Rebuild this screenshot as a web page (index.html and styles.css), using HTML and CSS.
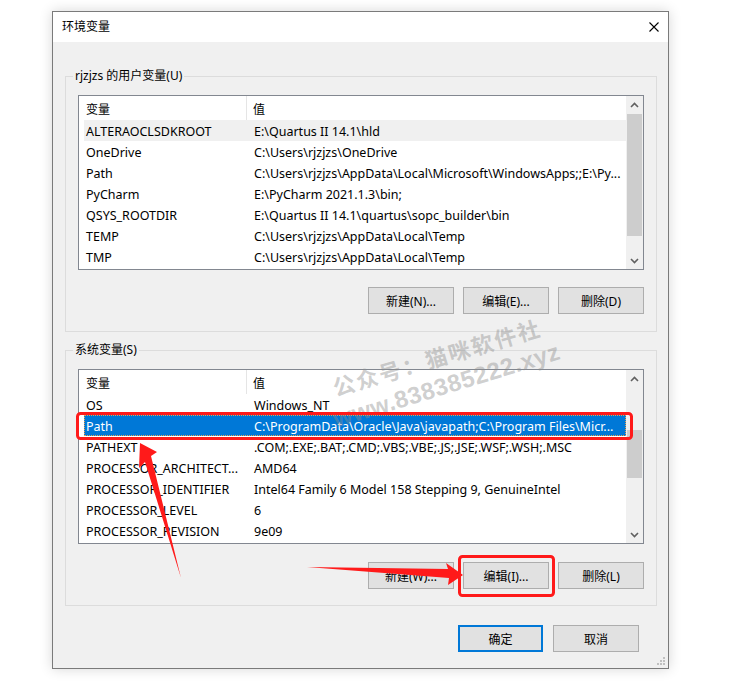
FILE: index.html
```html
<!DOCTYPE html>
<html lang="zh-CN">
<head>
<meta charset="utf-8">
<title>环境变量</title>
<link rel="stylesheet" href="styles.css">
</head>
<body>
<div class="page">
  <div class="window">
    <div class="titlebar">
      <span class="title">环境变量</span>
      <svg class="close" width="10" height="10" viewBox="0 0 10 10"><path d="M0.5 0.5L9.5 9.5M9.5 0.5L0.5 9.5" stroke="#000" stroke-width="1.1" fill="none"/></svg>
    </div>
    <div class="content">
      <div class="group user">
        <span class="legend">rjzjzs 的用户变量(U)</span>
        <div class="list">
          <div class="list-main">
            <div class="list-head"><div class="head-name">变量</div><div class="head-value">值</div></div>
            <div class="rows">
              <div class="row hover"><span class="name">ALTERAOCLSDKROOT</span><span class="value">E:\Quartus II 14.1\hld</span></div>
              <div class="row"><span class="name">OneDrive</span><span class="value">C:\Users\rjzjzs\OneDrive</span></div>
              <div class="row"><span class="name">Path</span><span class="value">C:\Users\rjzjzs\AppData\Local\Microsoft\WindowsApps;;E:\Py...</span></div>
              <div class="row"><span class="name">PyCharm</span><span class="value">E:\PyCharm 2021.1.3\bin;</span></div>
              <div class="row"><span class="name">QSYS_ROOTDIR</span><span class="value">E:\Quartus II 14.1\quartus\sopc_builder\bin</span></div>
              <div class="row"><span class="name">TEMP</span><span class="value">C:\Users\rjzjzs\AppData\Local\Temp</span></div>
              <div class="row"><span class="name">TMP</span><span class="value">C:\Users\rjzjzs\AppData\Local\Temp</span></div>
            </div>
          </div>
          <div class="vscroll">
            <div class="arrow"><svg width="9" height="6" viewBox="0 0 9 6"><path d="M1 5L4.5 1.5L8 5" stroke="#606060" stroke-width="1.6" fill="none"/></svg></div>
            <div class="thumb"></div>
            <div class="spacer"></div>
            <div class="arrow"><svg width="9" height="6" viewBox="0 0 9 6"><path d="M1 1L4.5 4.5L8 1" stroke="#606060" stroke-width="1.6" fill="none"/></svg></div>
          </div>
        </div>
        <div class="btns">
          <div class="btn">新建(N)...</div>
          <div class="btn">编辑(E)...</div>
          <div class="btn">删除(D)</div>
        </div>
      </div>

      <div class="group system">
        <span class="legend">系统变量(S)</span>
        <div class="list">
          <div class="list-main">
            <div class="list-head"><div class="head-name">变量</div><div class="head-value">值</div></div>
            <div class="rows">
              <div class="row"><span class="name">OS</span><span class="value">Windows_NT</span></div>
              <div class="row selected"><span class="name">Path</span><span class="value">C:\ProgramData\Oracle\Java\javapath;C:\Program Files\Micr...</span></div>
              <div class="row"><span class="name">PATHEXT</span><span class="value">.COM;.EXE;.BAT;.CMD;.VBS;.VBE;.JS;.JSE;.WSF;.WSH;.MSC</span></div>
              <div class="row"><span class="name">PROCESSOR_ARCHITECT...</span><span class="value">AMD64</span></div>
              <div class="row"><span class="name">PROCESSOR_IDENTIFIER</span><span class="value">Intel64 Family 6 Model 158 Stepping 9, GenuineIntel</span></div>
              <div class="row"><span class="name">PROCESSOR_LEVEL</span><span class="value">6</span></div>
              <div class="row"><span class="name">PROCESSOR_REVISION</span><span class="value">9e09</span></div>
            </div>
          </div>
          <div class="vscroll">
            <div class="arrow"><svg width="9" height="6" viewBox="0 0 9 6"><path d="M1 5L4.5 1.5L8 5" stroke="#606060" stroke-width="1.6" fill="none"/></svg></div>
            <div class="thumb"></div>
            <div class="spacer"></div>
            <div class="arrow"><svg width="9" height="6" viewBox="0 0 9 6"><path d="M1 1L4.5 4.5L8 1" stroke="#606060" stroke-width="1.6" fill="none"/></svg></div>
          </div>
        </div>
        <div class="btns">
          <div class="btn">新建(W)...</div>
          <div class="btn">编辑(I)...</div>
          <div class="btn">删除(L)</div>
        </div>
      </div>

      <div class="footer">
        <div class="btn ok">确定</div>
        <div class="btn">取消</div>
      </div>
    </div>
    <svg class="grip" width="10" height="10" viewBox="0 0 10 10">
      <rect x="7" y="1" width="2" height="2" fill="#c0c0c0"/>
      <rect x="4" y="4" width="2" height="2" fill="#c0c0c0"/>
      <rect x="7" y="4" width="2" height="2" fill="#c0c0c0"/>
      <rect x="1" y="7" width="2" height="2" fill="#c0c0c0"/>
      <rect x="4" y="7" width="2" height="2" fill="#c0c0c0"/>
      <rect x="7" y="7" width="2" height="2" fill="#c0c0c0"/>
    </svg>
  </div>

  <div class="wm wm1">公众号：猫咪软件社</div>
  <div class="wm wm2">www.838385222.xyz</div>

  <svg class="annot" width="756" height="681" viewBox="0 0 756 681">
    <rect x="77.5" y="413.5" width="554" height="25" rx="3" fill="none" stroke="#ff1a1a" stroke-width="3"/>
    <rect x="459.5" y="556.5" width="94" height="39" rx="3" fill="none" stroke="#ff1a1a" stroke-width="3"/>
    <polygon points="140,443 157,452 151,456 181,578 145,462 139,468" fill="#ff1a1a"/>
    <polygon points="307,567 448,569 446,563 463,575 448,585 449,578" fill="#ff1a1a"/>
  </svg>
</div>
</body>
</html>
```

FILE: styles.css
```css
* { box-sizing: border-box; }

body {
  margin: 0;
  background: #fff;
  font-family: "Noto Sans", "Noto Sans CJK SC", sans-serif;
  font-size: 12px;
  color: #000;
}

.page {
  position: relative;
  width: 756px;
  height: 681px;
  padding: 11px 0 0 52px;
  overflow: hidden;
}

.window {
  position: relative;
  width: 617px;
  height: 658px;
  border: 1px solid #7a7a7a;
  box-shadow: 0 0 12px rgba(0, 0, 0, 0.16);
  display: flex;
  flex-direction: column;
  background: #f0f0f0;
}

.titlebar {
  height: 30px;
  background: #fff;
  display: flex;
  align-items: center;
  justify-content: space-between;
  padding: 0 9px 0 9px;
}

.title { line-height: 30px; }

.content {
  flex: 1;
  background: #f0f0f0;
  padding: 34px 11px 0 12px;
}

.group {
  position: relative;
  height: 256px;
  border: 1px solid #dcdcdc;
  padding: 18px 12px 0 12px;
}

.group.system { margin-top: 18px; }

.legend {
  position: absolute;
  top: -10px;
  left: 7px;
  padding: 0 2px;
  background: #f0f0f0;
  line-height: 18px;
  white-space: nowrap;
}

.list {
  height: 175px;
  border: 1px solid #828790;
  background: #fff;
  display: flex;
  font-size: 12.5px;
}

.list-main {
  flex: 1;
  overflow: hidden;
  min-width: 0;
}

.list-head {
  display: flex;
  height: 24px;
  font-size: 12px;
}

.head-name {
  width: 168px;
  padding-left: 7px;
  padding-top: 1px;
  border-right: 1px solid #e5e5e5;
  display: flex;
  align-items: center;
}

.head-value {
  padding-left: 6px;
  padding-top: 1px;
  display: flex;
  align-items: center;
}

.rows { padding-left: 5px; }

.row {
  display: flex;
  height: 21px;
  line-height: 23px;
  white-space: nowrap;
}

.row .name {
  width: 168px;
  flex: none;
  padding-left: 2px;
  overflow: hidden;
  height: 21px;
}

.row .value { padding-left: 2px; height: 21px; }

.row.hover { background: #f0f0f0; }

.row.selected {
  background: #0078d7;
  color: #fff;
  outline: 1px dotted #e8a050;
  outline-offset: -1px;
}

.vscroll {
  width: 17px;
  flex: none;
  background: #f0f0f0;
  display: flex;
  flex-direction: column;
}

.arrow {
  height: 17px;
  flex: none;
  display: flex;
  align-items: center;
  justify-content: center;
}

.thumb {
  background: #cdcdcd;
  margin: 0 1px;
  flex: none;
}

.user .thumb { margin-top: 1px; height: 122px; }
.system .thumb { margin-top: 43px; height: 48px; }

.spacer { flex: 1; }

.btns {
  display: flex;
  justify-content: flex-end;
  gap: 9px;
  margin-top: 17px;
}

.system .btns { margin-top: 18px; }

.btn {
  width: 86px;
  height: 27px;
  border: 1px solid #adadad;
  background: #e1e1e1;
  display: flex;
  align-items: center;
  justify-content: center;
  white-space: nowrap;
}

.footer {
  display: flex;
  justify-content: flex-end;
  gap: 10px;
  margin-top: 19px;
  padding-right: 18px;
}

.btn.ok {
  width: 85px;
  border: 2px solid #0078d7;
}

.grip {
  position: absolute;
  right: 2px;
  bottom: 2px;
}

.wm {
  position: absolute;
  white-space: nowrap;
  font-weight: bold;
  color: rgba(140, 140, 140, 0.42);
  transform-origin: 0 50%;
  line-height: 24px;
  pointer-events: none;
}

.wm1 {
  left: 333px;
  top: 375px;
  font-family: "Noto Sans CJK SC", sans-serif;
  font-size: 22px;
  letter-spacing: 2px;
  transform: rotate(-16.5deg);
}

.wm2 {
  left: 334px;
  top: 408px;
  font-family: "Liberation Sans", sans-serif;
  font-size: 24px;
  letter-spacing: 0.5px;
  transform: rotate(-17deg);
}

.annot {
  position: absolute;
  left: 0;
  top: 0;
  pointer-events: none;
}
```
